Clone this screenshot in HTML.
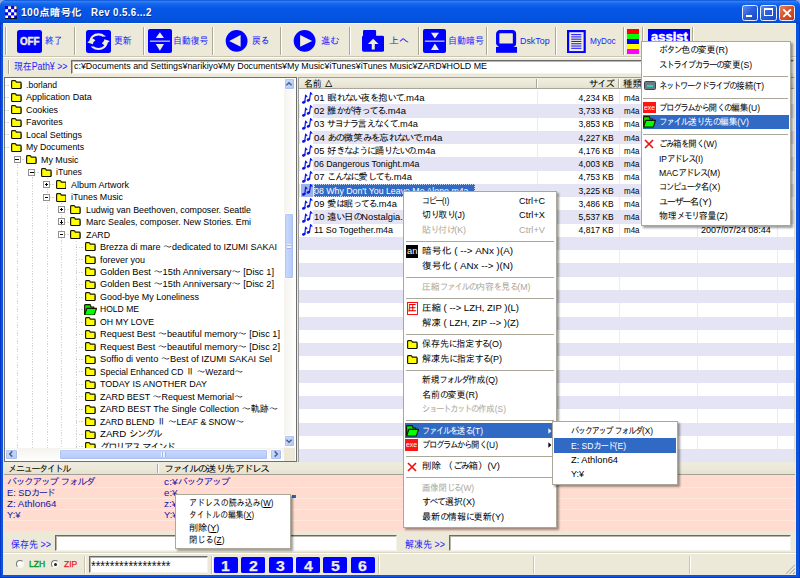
<!DOCTYPE html>
<html lang="ja"><head><meta charset="utf-8"><title>100点暗号化</title>
<style>
html,body{margin:0;padding:0;background:#8fa8e0;}
body{width:800px;height:578px;overflow:hidden;}
#win{position:relative;width:800px;height:578px;overflow:hidden;background:#0a54e0;border-radius:6px 6px 0 0;
 font-family:"Liberation Sans","IPAGothic",sans-serif;font-size:9.4px;color:#000;}
#win div,#win span.t,#win svg{position:absolute;}
.t{white-space:nowrap;line-height:12px;transform-origin:0 50%;}
.k{letter-spacing:-0.17em;}
.bl{color:#0000ff;}
.nv{color:#1414a8;}
.gr{color:#aca899;}
.wh{color:#fff;}
.menu{background:#fff;border:1px solid #aca899;box-shadow:2px 2px 2px rgba(0,0,0,.38);box-sizing:border-box;}
.sep{background:#aca899;height:1px;}
.hl{background:#316ac5;}
.inp{background:#fff;border:1px solid #6a6a6a;border-right-color:#f4f2ea;border-bottom-color:#f4f2ea;box-sizing:border-box;box-shadow:inset 1px 1px 0 #b8b6aa;}
.vsep{width:1px;background:#aca899;box-shadow:1px 0 0 #fff;}
.tb{background:#0000ff;border-radius:2px;}
.ttl{text-shadow:.8px .8px 0 #0a2c96;white-space:pre;letter-spacing:.4px}
.hv2{-webkit-text-stroke:.25px currentColor;}
.hv{-webkit-text-stroke:.45px currentColor;}
</style></head><body><div id="win">
<div class="" style="left:0.00px;top:0.00px;width:800.00px;height:23.50px;background:linear-gradient(#0a4fd0 0,#2f7ff5 6%,#1466ee 16%,#0657e6 35%,#0454e2 70%,#0650da 88%,#0445c4 100%);border-radius:6px 6px 0 0;"></div>
<div class="" style="left:3.30px;top:23.30px;width:792.80px;height:552.20px;background:#ece9d8;"></div>
<div class="" style="left:0.00px;top:23.00px;width:1.00px;height:555.00px;background:#0838c8;"></div>
<div class="" style="left:799.00px;top:23.00px;width:1.00px;height:555.00px;background:#0838c8;"></div>
<div class="" style="left:0.00px;top:577.00px;width:800.00px;height:1.00px;background:#0838c8;"></div>
<svg style="left:4.9px;top:6.1px" width="12.2" height="12.6" viewBox="0 0 4 4" preserveAspectRatio="none"><rect width="4" height="4" fill="#fff"/><rect x="0" y="0" width="1" height="1" fill="#0000ff"/><rect x="2" y="0" width="1" height="1" fill="#0000ff"/><rect x="1" y="1" width="1" height="1" fill="#0000ff"/><rect x="3" y="1" width="1" height="1" fill="#0000ff"/><rect x="0" y="2" width="1" height="1" fill="#0000ff"/><rect x="2" y="2" width="1" height="1" fill="#0000ff"/><rect x="1" y="3" width="1" height="1" fill="#0000ff"/><rect x="3" y="3" width="1" height="1" fill="#0000ff"/><path d="M0 0H4V4H0z" fill="none" stroke="#000" stroke-width=".16"/><path d="M4 0V4H0" fill="none" stroke="#000" stroke-width=".3"/></svg>
<span id="t1" class="t ttl" style="left:20.50px;top:6.70px;color:#fff;font-size:10.2px;font-weight:bold;transform:scaleX(1.0072)">100点暗号化</span>
<span id="t2" class="t ttl" style="left:91.30px;top:6.70px;color:#fff;font-size:10.2px;font-weight:bold;transform:scaleX(0.9552)">Rev 0.5.6...2</span>
<div class="" style="left:742.20px;top:4.60px;width:16.20px;height:16.20px;background:linear-gradient(135deg,#5f8df0 0,#2c5fdc 45%,#1c48c4 100%);border:1px solid #e8eefc;border-radius:2.5px;box-sizing:border-box;"></div>
<div class="" style="left:760.40px;top:4.60px;width:16.20px;height:16.20px;background:linear-gradient(135deg,#5f8df0 0,#2c5fdc 45%,#1c48c4 100%);border:1px solid #e8eefc;border-radius:2.5px;box-sizing:border-box;"></div>
<div class="" style="left:778.50px;top:4.60px;width:16.20px;height:16.20px;background:linear-gradient(135deg,#e8825c 0,#d9532c 45%,#c23a14 100%);border:1px solid #e8eefc;border-radius:2.5px;box-sizing:border-box;"></div>
<div class="" style="left:746.30px;top:15.00px;width:5.60px;height:2.20px;background:#fff;"></div>
<div class="" style="left:764.20px;top:8.30px;width:8.40px;height:8.20px;border:1px solid #fff;border-top-width:2.3px;box-sizing:border-box;"></div>
<svg style="left:778.5px;top:4.6px" width="16.2" height="16.2" viewBox="0 0 16.2 16.2"><path d="M4.3 4.3L11.9 11.9M11.9 4.3L4.3 11.9" stroke="#fff" stroke-width="1.9" stroke-linecap="butt"/></svg>
<div class="" style="left:3.30px;top:23.30px;width:792.80px;height:1.00px;background:#fff;opacity:.7"></div>
<div class="" style="left:3.30px;top:55.60px;width:792.80px;height:1.00px;background:#c9c5b2;"></div>
<div class="" style="left:3.30px;top:56.60px;width:792.80px;height:1.00px;background:#fff;"></div>
<div class="vsep" style="left:5.30px;top:27.00px;width:1.00px;height:27.50px;"></div>
<div class="vsep" style="left:74.30px;top:27.00px;width:1.00px;height:27.50px;"></div>
<div class="vsep" style="left:143.00px;top:27.00px;width:1.00px;height:27.50px;"></div>
<div class="vsep" style="left:211.70px;top:27.00px;width:1.00px;height:27.50px;"></div>
<div class="vsep" style="left:280.30px;top:27.00px;width:1.00px;height:27.50px;"></div>
<div class="vsep" style="left:349.00px;top:27.00px;width:1.00px;height:27.50px;"></div>
<div class="vsep" style="left:417.60px;top:27.00px;width:1.00px;height:27.50px;"></div>
<div class="vsep" style="left:486.20px;top:27.00px;width:1.00px;height:27.50px;"></div>
<div class="vsep" style="left:555.00px;top:27.00px;width:1.00px;height:27.50px;"></div>
<div class="vsep" style="left:623.40px;top:27.00px;width:1.00px;height:27.50px;"></div>
<div class="vsep" style="left:641.50px;top:27.00px;width:1.00px;height:27.50px;"></div>
<div class="vsep" style="left:692.40px;top:27.00px;width:1.00px;height:27.50px;"></div>
<div class="tb" style="left:16.90px;top:29.60px;width:25.20px;height:23.40px;border-radius:2.5px"></div>
<span id="t3" class="t hv" style="left:19.70px;top:35.60px;color:#efecdc;font-size:10px;font-weight:bold;transform:scaleX(0.9800)">OFF</span>
<span id="t4" class="t " style="left:45.20px;top:35.30px;color:#2222ff;font-size:9.6px;transform:scaleX(0.9068)">終了</span>
<div class="tb" style="left:85.85px;top:29.60px;width:25.10px;height:23.50px;border-radius:2.5px"></div>
<svg style="left:85.85px;top:29.60px" width="25.10" height="23.50" viewBox="0 0 25.10 23.50"><ellipse cx="12.5" cy="11.7" rx="8.3" ry="7.3" fill="none" stroke="#efecdc" stroke-width="2.1"/><rect x="2.6" y="12.2" width="5.5" height="4.2" fill="#00f"/><rect x="17" y="6.6" width="5.5" height="4.2" fill="#00f"/><path d="M1.3 12.4L6.6 8.2L9.4 10.2L7.2 12.4L7 14.2z" fill="#efecdc"/><path d="M23.8 10.9L18.6 15.4L15.8 13.2L18 11L18.3 9.3z" fill="#efecdc"/></svg>
<span id="t5" class="t " style="left:114.10px;top:35.30px;color:#2222ff;font-size:9.6px;transform:scaleX(0.9225)">更新</span>
<div class="tb" style="left:148.10px;top:29.40px;width:23.80px;height:23.50px;border-radius:2px"></div>
<svg style="left:148.10px;top:29.40px" width="23.80" height="23.50" viewBox="0 0 23.80 23.50"><path d="M11.9 3.2L16 9.1H7.8z" fill="#efecdc"/><rect x="1.9" y="11.6" width="20.1" height="1.1" fill="#efecdc"/><path d="M11.9 21.8L16 15H7.8z" fill="#efecdc"/></svg>
<span id="t6" class="t " style="left:173.20px;top:35.30px;color:#2222ff;font-size:9.6px;transform:scaleX(0.9225)">自動復号</span>
<svg style="left:224.50px;top:29.40px" width="24.00" height="24.00" viewBox="0 0 24.00 24.00"><circle cx="11.6" cy="11.9" r="10.9" fill="#00f"/><path d="M4.2 11.9L15.6 6.1V17.7z" fill="#efecdc"/></svg>
<span id="t7" class="t " style="left:252.00px;top:35.30px;color:#2222ff;font-size:9.6px;transform:scaleX(0.9110)">戻<span class="k">る</span></span>
<svg style="left:292.50px;top:29.40px" width="24.00" height="24.00" viewBox="0 0 24.00 24.00"><circle cx="11.6" cy="11.9" r="10.9" fill="#00f"/><path d="M19.2 11.9L7.1 6.1V17.7z" fill="#efecdc"/></svg>
<span id="t8" class="t " style="left:320.50px;top:35.30px;color:#2222ff;font-size:9.6px;transform:scaleX(0.9680)">進<span class="k">む</span></span>
<svg style="left:361.90px;top:30.30px" width="22.40" height="22.00" viewBox="0 0 22.40 22.00"><path d="M1 1.2Q1 .1 2.2 .1H13Q14.1 .1 14.1 1.2V5.7H20.4Q22.2 5.7 22.2 7.5V20Q22.2 21.8 20.4 21.8H1.8Q0 21.8 0 20V7.5Q0 6 1 5.8z" fill="#00f"/><path d="M11.1 8.7L16.5 14H12.75V19.6H9.75V14H5.85z" fill="#efecdc"/></svg>
<span id="t9" class="t " style="left:388.90px;top:35.30px;color:#2222ff;font-size:9.6px;transform:scaleX(1.0363)">上<span class="k">へ</span></span>
<div class="tb" style="left:422.95px;top:29.40px;width:23.40px;height:23.60px;border-radius:2px"></div>
<svg style="left:422.95px;top:29.40px" width="23.40" height="23.60" viewBox="0 0 23.40 23.60"><path d="M11.9 9.6L16 3.7H8z" fill="#efecdc"/><rect x="1.9" y="11.6" width="19.6" height="1.1" fill="#efecdc"/><path d="M11.9 14.6L16 20.9H8z" fill="#efecdc"/></svg>
<span id="t10" class="t " style="left:448.00px;top:35.30px;color:#2222ff;font-size:9.6px;transform:scaleX(0.9355)">自動暗号</span>
<svg style="left:496.20px;top:29.50px" width="21.20" height="23.00" viewBox="0 0 21.20 23.00"><rect x="1.7" y="1.7" width="16.8" height="13.4" rx="2.2" fill="none" stroke="#00f" stroke-width="3.3"/><rect x="2.6" y="15.5" width="15" height="2" fill="#00f"/><rect x="0" y="16.9" width="21" height="5.9" fill="#00f"/></svg>
<span id="t11" class="t " style="left:519.50px;top:35.30px;color:#2222ff;font-size:9.6px;transform:scaleX(0.9250)">DskTop</span>
<svg style="left:567.15px;top:29.60px" width="18.80" height="23.30" viewBox="0 0 18.80 23.30"><rect x="1.1" y="1.1" width="16.6" height="21.1" fill="#efecdc" stroke="#00f" stroke-width="2.2"/><rect x="4.2" y="4.10" width="10.2" height="1.05" fill="#1a1aff"/><rect x="4.2" y="6.38" width="10.2" height="1.05" fill="#1a1aff"/><rect x="4.2" y="8.66" width="10.2" height="1.05" fill="#1a1aff"/><rect x="4.2" y="10.94" width="10.2" height="1.05" fill="#1a1aff"/><rect x="4.2" y="13.22" width="10.2" height="1.05" fill="#1a1aff"/><rect x="4.2" y="15.50" width="10.2" height="1.05" fill="#1a1aff"/><rect x="4.2" y="17.78" width="10.2" height="1.05" fill="#1a1aff"/></svg>
<span id="t12" class="t " style="left:589.90px;top:35.30px;color:#2222ff;font-size:9.6px;transform:scaleX(0.8607)">MyDoc</span>
<div class="" style="left:627.35px;top:28.90px;width:11.55px;height:5.00px;background:#ff0000;"></div>
<div class="" style="left:627.35px;top:33.87px;width:11.55px;height:5.00px;background:#00ff00;"></div>
<div class="" style="left:627.35px;top:38.84px;width:11.55px;height:5.00px;background:#0000ff;"></div>
<div class="" style="left:627.35px;top:43.81px;width:11.55px;height:5.00px;background:#ffff00;"></div>
<div class="" style="left:627.35px;top:48.78px;width:11.55px;height:5.00px;background:#ff00ff;"></div>
<div class="" style="left:648.00px;top:28.90px;width:42.00px;height:14.00px;background:#0000ff;"></div>
<span id="t13" class="t hv" style="left:650.60px;top:31.10px;color:#fff;font-size:12px;font-weight:bold;transform:scaleX(1.0814)">assist</span>
<div class="vsep" style="left:7.50px;top:60.00px;width:1.00px;height:13.50px;"></div>
<span id="t14" class="t " style="left:13.80px;top:60.50px;color:#2222ff;font-size:10.3px;transform:scaleX(0.8575)">現在Path¥ &gt;&gt;</span>
<div class="inp" style="left:71.20px;top:59.60px;width:723.30px;height:14.50px;"></div>
<span id="t15" class="t " style="left:73.60px;top:60.10px;transform:scaleX(0.9463)">c:¥Documents and Settings¥narikiyo¥My Documents¥My Music¥iTunes¥iTunes Music¥ZARD¥HOLD ME</span>
<div class="" style="left:4.00px;top:76.50px;width:292.80px;height:385.00px;background:#fff;border:1px solid #6e6e6e;box-sizing:border-box;overflow:hidden;"></div>
<div class="" style="left:2.00px;top:78.00px;width:1.00px;height:468.93px;background:repeating-linear-gradient(180deg,#9a9a9a 0 .8px,transparent .8px 1.6px);opacity:.42"></div>
<div class="" style="left:17.00px;top:159.40px;width:1.00px;height:291.60px;background:repeating-linear-gradient(180deg,#9a9a9a 0 .8px,transparent .8px 1.6px);opacity:.42"></div>
<div class="" style="left:31.70px;top:171.88px;width:1.00px;height:276.12px;background:repeating-linear-gradient(180deg,#9a9a9a 0 .8px,transparent .8px 1.6px);opacity:.42"></div>
<div class="" style="left:46.50px;top:178.35px;width:1.00px;height:269.65px;background:repeating-linear-gradient(180deg,#9a9a9a 0 .8px,transparent .8px 1.6px);opacity:.42"></div>
<div class="" style="left:61.30px;top:203.30px;width:1.00px;height:244.70px;background:repeating-linear-gradient(180deg,#9a9a9a 0 .8px,transparent .8px 1.6px);opacity:.42"></div>
<div class="" style="left:76.10px;top:240.72px;width:1.00px;height:207.28px;background:repeating-linear-gradient(180deg,#9a9a9a 0 .8px,transparent .8px 1.6px);opacity:.42"></div>
<div class="" style="left:2.40px;top:84.55px;width:8.00px;height:1.00px;background:repeating-linear-gradient(90deg,#9a9a9a 0 .8px,transparent .8px 1.6px);opacity:.42"></div>
<svg style="left:11.20px;top:80.25px" width="10.8" height="9.2" viewBox="0 0 10.8 9.2"><path d="M.6 7.8V1.5Q.6 .6 1.5 .6H3.8Q4.6 .6 4.9 1.2L5.3 2.1H9.2Q10.1 2.1 10.1 3V7.8Q10.1 8.5 9.2 8.5H1.5Q.6 8.5 .6 7.8z" fill="#ffff00" stroke="#1c1a00" stroke-width="1.15"/><path d="M1.2 8.5H9.3Q10.1 8.5 10.1 7.6V3.4" fill="none" stroke="#000" stroke-width=".5"/></svg>
<span id="t16" class="t " style="left:26.30px;top:78.85px;transform:scaleX(0.9147)">.borland</span>
<div class="" style="left:2.40px;top:97.02px;width:8.00px;height:1.00px;background:repeating-linear-gradient(90deg,#9a9a9a 0 .8px,transparent .8px 1.6px);opacity:.42"></div>
<div class="" style="left:-1.50px;top:93.72px;width:6.90px;height:7.00px;background:#fff;border:1px solid #919191;box-sizing:border-box;"></div>
<svg style="left:11.20px;top:92.72px" width="10.8" height="9.2" viewBox="0 0 10.8 9.2"><path d="M.6 7.8V1.5Q.6 .6 1.5 .6H3.8Q4.6 .6 4.9 1.2L5.3 2.1H9.2Q10.1 2.1 10.1 3V7.8Q10.1 8.5 9.2 8.5H1.5Q.6 8.5 .6 7.8z" fill="#ffff00" stroke="#1c1a00" stroke-width="1.15"/><path d="M1.2 8.5H9.3Q10.1 8.5 10.1 7.6V3.4" fill="none" stroke="#000" stroke-width=".5"/></svg>
<span id="t17" class="t " style="left:26.30px;top:91.32px;transform:scaleX(0.9622)">Application Data</span>
<div class="" style="left:2.40px;top:109.50px;width:8.00px;height:1.00px;background:repeating-linear-gradient(90deg,#9a9a9a 0 .8px,transparent .8px 1.6px);opacity:.42"></div>
<svg style="left:11.20px;top:105.20px" width="10.8" height="9.2" viewBox="0 0 10.8 9.2"><path d="M.6 7.8V1.5Q.6 .6 1.5 .6H3.8Q4.6 .6 4.9 1.2L5.3 2.1H9.2Q10.1 2.1 10.1 3V7.8Q10.1 8.5 9.2 8.5H1.5Q.6 8.5 .6 7.8z" fill="#ffff00" stroke="#1c1a00" stroke-width="1.15"/><path d="M1.2 8.5H9.3Q10.1 8.5 10.1 7.6V3.4" fill="none" stroke="#000" stroke-width=".5"/></svg>
<span id="t18" class="t " style="left:26.30px;top:103.80px;transform:scaleX(0.9446)">Cookies</span>
<div class="" style="left:2.40px;top:121.97px;width:8.00px;height:1.00px;background:repeating-linear-gradient(90deg,#9a9a9a 0 .8px,transparent .8px 1.6px);opacity:.42"></div>
<div class="" style="left:-1.50px;top:118.67px;width:6.90px;height:7.00px;background:#fff;border:1px solid #919191;box-sizing:border-box;"></div>
<svg style="left:11.20px;top:117.67px" width="10.8" height="9.2" viewBox="0 0 10.8 9.2"><path d="M.6 7.8V1.5Q.6 .6 1.5 .6H3.8Q4.6 .6 4.9 1.2L5.3 2.1H9.2Q10.1 2.1 10.1 3V7.8Q10.1 8.5 9.2 8.5H1.5Q.6 8.5 .6 7.8z" fill="#ffff00" stroke="#1c1a00" stroke-width="1.15"/><path d="M1.2 8.5H9.3Q10.1 8.5 10.1 7.6V3.4" fill="none" stroke="#000" stroke-width=".5"/></svg>
<span id="t19" class="t " style="left:26.30px;top:116.27px;transform:scaleX(0.9517)">Favorites</span>
<div class="" style="left:2.40px;top:134.45px;width:8.00px;height:1.00px;background:repeating-linear-gradient(90deg,#9a9a9a 0 .8px,transparent .8px 1.6px);opacity:.42"></div>
<div class="" style="left:-1.50px;top:131.15px;width:6.90px;height:7.00px;background:#fff;border:1px solid #919191;box-sizing:border-box;"></div>
<svg style="left:11.20px;top:130.15px" width="10.8" height="9.2" viewBox="0 0 10.8 9.2"><path d="M.6 7.8V1.5Q.6 .6 1.5 .6H3.8Q4.6 .6 4.9 1.2L5.3 2.1H9.2Q10.1 2.1 10.1 3V7.8Q10.1 8.5 9.2 8.5H1.5Q.6 8.5 .6 7.8z" fill="#ffff00" stroke="#1c1a00" stroke-width="1.15"/><path d="M1.2 8.5H9.3Q10.1 8.5 10.1 7.6V3.4" fill="none" stroke="#000" stroke-width=".5"/></svg>
<span id="t20" class="t " style="left:26.30px;top:128.75px;transform:scaleX(0.9507)">Local Settings</span>
<div class="" style="left:2.40px;top:146.93px;width:8.00px;height:1.00px;background:repeating-linear-gradient(90deg,#9a9a9a 0 .8px,transparent .8px 1.6px);opacity:.42"></div>
<div class="" style="left:-1.50px;top:143.62px;width:6.90px;height:7.00px;background:#fff;border:1px solid #919191;box-sizing:border-box;"></div>
<svg style="left:11.20px;top:142.62px" width="10.8" height="9.2" viewBox="0 0 10.8 9.2"><path d="M.6 7.8V1.5Q.6 .6 1.5 .6H3.8Q4.6 .6 4.9 1.2L5.3 2.1H9.2Q10.1 2.1 10.1 3V7.8Q10.1 8.5 9.2 8.5H1.5Q.6 8.5 .6 7.8z" fill="#ffff00" stroke="#1c1a00" stroke-width="1.15"/><path d="M1.2 8.5H9.3Q10.1 8.5 10.1 7.6V3.4" fill="none" stroke="#000" stroke-width=".5"/></svg>
<span id="t21" class="t " style="left:26.30px;top:141.23px;transform:scaleX(0.9275)">My Documents</span>
<div class="" style="left:17.20px;top:159.40px;width:8.00px;height:1.00px;background:repeating-linear-gradient(90deg,#9a9a9a 0 .8px,transparent .8px 1.6px);opacity:.42"></div>
<div class="" style="left:13.50px;top:156.10px;width:7.00px;height:7.00px;background:#fff;border:1px solid #919191;box-sizing:border-box;"></div>
<div class="" style="left:15.30px;top:159.20px;width:3.60px;height:0.90px;background:#000;"></div>
<svg style="left:26.00px;top:155.10px" width="10.8" height="9.2" viewBox="0 0 10.8 9.2"><path d="M.6 7.8V1.5Q.6 .6 1.5 .6H3.8Q4.6 .6 4.9 1.2L5.3 2.1H9.2Q10.1 2.1 10.1 3V7.8Q10.1 8.5 9.2 8.5H1.5Q.6 8.5 .6 7.8z" fill="#ffff00" stroke="#1c1a00" stroke-width="1.15"/><path d="M1.2 8.5H9.3Q10.1 8.5 10.1 7.6V3.4" fill="none" stroke="#000" stroke-width=".5"/></svg>
<span id="t22" class="t " style="left:41.10px;top:153.70px;transform:scaleX(0.9471)">My Music</span>
<div class="" style="left:32.00px;top:171.88px;width:8.00px;height:1.00px;background:repeating-linear-gradient(90deg,#9a9a9a 0 .8px,transparent .8px 1.6px);opacity:.42"></div>
<div class="" style="left:28.30px;top:168.57px;width:7.00px;height:7.00px;background:#fff;border:1px solid #919191;box-sizing:border-box;"></div>
<div class="" style="left:30.10px;top:171.68px;width:3.60px;height:0.90px;background:#000;"></div>
<svg style="left:40.80px;top:167.57px" width="10.8" height="9.2" viewBox="0 0 10.8 9.2"><path d="M.6 7.8V1.5Q.6 .6 1.5 .6H3.8Q4.6 .6 4.9 1.2L5.3 2.1H9.2Q10.1 2.1 10.1 3V7.8Q10.1 8.5 9.2 8.5H1.5Q.6 8.5 .6 7.8z" fill="#ffff00" stroke="#1c1a00" stroke-width="1.15"/><path d="M1.2 8.5H9.3Q10.1 8.5 10.1 7.6V3.4" fill="none" stroke="#000" stroke-width=".5"/></svg>
<span id="t23" class="t " style="left:55.90px;top:166.18px;transform:scaleX(0.9354)">iTunes</span>
<div class="" style="left:46.80px;top:184.35px;width:8.00px;height:1.00px;background:repeating-linear-gradient(90deg,#9a9a9a 0 .8px,transparent .8px 1.6px);opacity:.42"></div>
<div class="" style="left:43.10px;top:181.05px;width:7.00px;height:7.00px;background:#fff;border:1px solid #919191;box-sizing:border-box;"></div>
<div class="" style="left:44.90px;top:184.15px;width:3.60px;height:0.90px;background:#000;"></div>
<div class="" style="left:46.25px;top:182.75px;width:0.90px;height:3.60px;background:#000;"></div>
<svg style="left:55.60px;top:180.05px" width="10.8" height="9.2" viewBox="0 0 10.8 9.2"><path d="M.6 7.8V1.5Q.6 .6 1.5 .6H3.8Q4.6 .6 4.9 1.2L5.3 2.1H9.2Q10.1 2.1 10.1 3V7.8Q10.1 8.5 9.2 8.5H1.5Q.6 8.5 .6 7.8z" fill="#ffff00" stroke="#1c1a00" stroke-width="1.15"/><path d="M1.2 8.5H9.3Q10.1 8.5 10.1 7.6V3.4" fill="none" stroke="#000" stroke-width=".5"/></svg>
<span id="t24" class="t " style="left:70.70px;top:178.65px;transform:scaleX(0.9597)">Album Artwork</span>
<div class="" style="left:46.80px;top:196.82px;width:8.00px;height:1.00px;background:repeating-linear-gradient(90deg,#9a9a9a 0 .8px,transparent .8px 1.6px);opacity:.42"></div>
<div class="" style="left:43.10px;top:193.52px;width:7.00px;height:7.00px;background:#fff;border:1px solid #919191;box-sizing:border-box;"></div>
<div class="" style="left:44.90px;top:196.62px;width:3.60px;height:0.90px;background:#000;"></div>
<svg style="left:55.60px;top:192.52px" width="10.8" height="9.2" viewBox="0 0 10.8 9.2"><path d="M.6 7.8V1.5Q.6 .6 1.5 .6H3.8Q4.6 .6 4.9 1.2L5.3 2.1H9.2Q10.1 2.1 10.1 3V7.8Q10.1 8.5 9.2 8.5H1.5Q.6 8.5 .6 7.8z" fill="#ffff00" stroke="#1c1a00" stroke-width="1.15"/><path d="M1.2 8.5H9.3Q10.1 8.5 10.1 7.6V3.4" fill="none" stroke="#000" stroke-width=".5"/></svg>
<span id="t25" class="t " style="left:70.70px;top:191.12px;transform:scaleX(0.9473)">iTunes Music</span>
<div class="" style="left:61.60px;top:209.30px;width:8.00px;height:1.00px;background:repeating-linear-gradient(90deg,#9a9a9a 0 .8px,transparent .8px 1.6px);opacity:.42"></div>
<div class="" style="left:57.90px;top:206.00px;width:7.00px;height:7.00px;background:#fff;border:1px solid #919191;box-sizing:border-box;"></div>
<div class="" style="left:59.70px;top:209.10px;width:3.60px;height:0.90px;background:#000;"></div>
<div class="" style="left:61.05px;top:207.70px;width:0.90px;height:3.60px;background:#000;"></div>
<svg style="left:70.40px;top:205.00px" width="10.8" height="9.2" viewBox="0 0 10.8 9.2"><path d="M.6 7.8V1.5Q.6 .6 1.5 .6H3.8Q4.6 .6 4.9 1.2L5.3 2.1H9.2Q10.1 2.1 10.1 3V7.8Q10.1 8.5 9.2 8.5H1.5Q.6 8.5 .6 7.8z" fill="#ffff00" stroke="#1c1a00" stroke-width="1.15"/><path d="M1.2 8.5H9.3Q10.1 8.5 10.1 7.6V3.4" fill="none" stroke="#000" stroke-width=".5"/></svg>
<span id="t26" class="t " style="left:85.50px;top:203.60px;transform:scaleX(0.9422)">Ludwig van Beethoven, composer. Seattle</span>
<div class="" style="left:61.60px;top:221.77px;width:8.00px;height:1.00px;background:repeating-linear-gradient(90deg,#9a9a9a 0 .8px,transparent .8px 1.6px);opacity:.42"></div>
<div class="" style="left:57.90px;top:218.47px;width:7.00px;height:7.00px;background:#fff;border:1px solid #919191;box-sizing:border-box;"></div>
<div class="" style="left:59.70px;top:221.57px;width:3.60px;height:0.90px;background:#000;"></div>
<div class="" style="left:61.05px;top:220.17px;width:0.90px;height:3.60px;background:#000;"></div>
<svg style="left:70.40px;top:217.47px" width="10.8" height="9.2" viewBox="0 0 10.8 9.2"><path d="M.6 7.8V1.5Q.6 .6 1.5 .6H3.8Q4.6 .6 4.9 1.2L5.3 2.1H9.2Q10.1 2.1 10.1 3V7.8Q10.1 8.5 9.2 8.5H1.5Q.6 8.5 .6 7.8z" fill="#ffff00" stroke="#1c1a00" stroke-width="1.15"/><path d="M1.2 8.5H9.3Q10.1 8.5 10.1 7.6V3.4" fill="none" stroke="#000" stroke-width=".5"/></svg>
<span id="t27" class="t " style="left:85.50px;top:216.07px;transform:scaleX(0.9425)">Marc Seales, composer. New Stories. Emi</span>
<div class="" style="left:61.60px;top:234.25px;width:8.00px;height:1.00px;background:repeating-linear-gradient(90deg,#9a9a9a 0 .8px,transparent .8px 1.6px);opacity:.42"></div>
<div class="" style="left:57.90px;top:230.95px;width:7.00px;height:7.00px;background:#fff;border:1px solid #919191;box-sizing:border-box;"></div>
<div class="" style="left:59.70px;top:234.05px;width:3.60px;height:0.90px;background:#000;"></div>
<svg style="left:70.40px;top:229.95px" width="10.8" height="9.2" viewBox="0 0 10.8 9.2"><path d="M.6 7.8V1.5Q.6 .6 1.5 .6H3.8Q4.6 .6 4.9 1.2L5.3 2.1H9.2Q10.1 2.1 10.1 3V7.8Q10.1 8.5 9.2 8.5H1.5Q.6 8.5 .6 7.8z" fill="#ffff00" stroke="#1c1a00" stroke-width="1.15"/><path d="M1.2 8.5H9.3Q10.1 8.5 10.1 7.6V3.4" fill="none" stroke="#000" stroke-width=".5"/></svg>
<span id="t28" class="t " style="left:85.50px;top:228.55px;transform:scaleX(0.9400)">ZARD</span>
<div class="" style="left:76.40px;top:246.72px;width:8.00px;height:1.00px;background:repeating-linear-gradient(90deg,#9a9a9a 0 .8px,transparent .8px 1.6px);opacity:.42"></div>
<svg style="left:85.20px;top:242.42px" width="10.8" height="9.2" viewBox="0 0 10.8 9.2"><path d="M.6 7.8V1.5Q.6 .6 1.5 .6H3.8Q4.6 .6 4.9 1.2L5.3 2.1H9.2Q10.1 2.1 10.1 3V7.8Q10.1 8.5 9.2 8.5H1.5Q.6 8.5 .6 7.8z" fill="#ffff00" stroke="#1c1a00" stroke-width="1.15"/><path d="M1.2 8.5H9.3Q10.1 8.5 10.1 7.6V3.4" fill="none" stroke="#000" stroke-width=".5"/></svg>
<span id="t29" class="t " style="left:100.30px;top:241.02px;transform:scaleX(0.9596)">Brezza di mare ～dedicated to IZUMI SAKAI</span>
<div class="" style="left:76.40px;top:259.20px;width:8.00px;height:1.00px;background:repeating-linear-gradient(90deg,#9a9a9a 0 .8px,transparent .8px 1.6px);opacity:.42"></div>
<svg style="left:85.20px;top:254.90px" width="10.8" height="9.2" viewBox="0 0 10.8 9.2"><path d="M.6 7.8V1.5Q.6 .6 1.5 .6H3.8Q4.6 .6 4.9 1.2L5.3 2.1H9.2Q10.1 2.1 10.1 3V7.8Q10.1 8.5 9.2 8.5H1.5Q.6 8.5 .6 7.8z" fill="#ffff00" stroke="#1c1a00" stroke-width="1.15"/><path d="M1.2 8.5H9.3Q10.1 8.5 10.1 7.6V3.4" fill="none" stroke="#000" stroke-width=".5"/></svg>
<span id="t30" class="t " style="left:100.30px;top:253.50px;transform:scaleX(0.9594)">forever you</span>
<div class="" style="left:76.40px;top:271.68px;width:8.00px;height:1.00px;background:repeating-linear-gradient(90deg,#9a9a9a 0 .8px,transparent .8px 1.6px);opacity:.42"></div>
<svg style="left:85.20px;top:267.38px" width="10.8" height="9.2" viewBox="0 0 10.8 9.2"><path d="M.6 7.8V1.5Q.6 .6 1.5 .6H3.8Q4.6 .6 4.9 1.2L5.3 2.1H9.2Q10.1 2.1 10.1 3V7.8Q10.1 8.5 9.2 8.5H1.5Q.6 8.5 .6 7.8z" fill="#ffff00" stroke="#1c1a00" stroke-width="1.15"/><path d="M1.2 8.5H9.3Q10.1 8.5 10.1 7.6V3.4" fill="none" stroke="#000" stroke-width=".5"/></svg>
<span id="t31" class="t " style="left:100.30px;top:265.98px;transform:scaleX(0.9850)">Golden Best ～15th Anniversary～ [Disc 1]</span>
<div class="" style="left:76.40px;top:284.15px;width:8.00px;height:1.00px;background:repeating-linear-gradient(90deg,#9a9a9a 0 .8px,transparent .8px 1.6px);opacity:.42"></div>
<svg style="left:85.20px;top:279.85px" width="10.8" height="9.2" viewBox="0 0 10.8 9.2"><path d="M.6 7.8V1.5Q.6 .6 1.5 .6H3.8Q4.6 .6 4.9 1.2L5.3 2.1H9.2Q10.1 2.1 10.1 3V7.8Q10.1 8.5 9.2 8.5H1.5Q.6 8.5 .6 7.8z" fill="#ffff00" stroke="#1c1a00" stroke-width="1.15"/><path d="M1.2 8.5H9.3Q10.1 8.5 10.1 7.6V3.4" fill="none" stroke="#000" stroke-width=".5"/></svg>
<span id="t32" class="t " style="left:100.30px;top:278.45px;transform:scaleX(0.9850)">Golden Best ～15th Anniversary～ [Disc 2]</span>
<div class="" style="left:76.40px;top:296.62px;width:8.00px;height:1.00px;background:repeating-linear-gradient(90deg,#9a9a9a 0 .8px,transparent .8px 1.6px);opacity:.42"></div>
<svg style="left:85.20px;top:292.33px" width="10.8" height="9.2" viewBox="0 0 10.8 9.2"><path d="M.6 7.8V1.5Q.6 .6 1.5 .6H3.8Q4.6 .6 4.9 1.2L5.3 2.1H9.2Q10.1 2.1 10.1 3V7.8Q10.1 8.5 9.2 8.5H1.5Q.6 8.5 .6 7.8z" fill="#ffff00" stroke="#1c1a00" stroke-width="1.15"/><path d="M1.2 8.5H9.3Q10.1 8.5 10.1 7.6V3.4" fill="none" stroke="#000" stroke-width=".5"/></svg>
<span id="t33" class="t " style="left:100.30px;top:290.93px;transform:scaleX(0.9546)">Good-bye My Loneliness</span>
<div class="" style="left:76.40px;top:309.10px;width:8.00px;height:1.00px;background:repeating-linear-gradient(90deg,#9a9a9a 0 .8px,transparent .8px 1.6px);opacity:.42"></div>
<svg style="left:84.20px;top:303.60px" width="13" height="11.6" viewBox="0 0 13 11.6"><path d="M.6 10.8V1.3Q.6 .6 1.3 .6H5.7Q6.4 .6 6.6 1.3L7 3H9.7V4.4" fill="#00e400" stroke="#161600" stroke-width="1.1"/><path d="M1 4.6H3.2L1 10z" fill="#6b5800"/><path d="M.6 11L2.9 4.4H12.5L10.3 11z" fill="#00ff00" stroke="#161600" stroke-width="1.1" stroke-linejoin="round"/></svg>
<span id="t34" class="t " style="left:100.30px;top:303.40px;transform:scaleX(0.9129)">HOLD ME</span>
<div class="" style="left:76.40px;top:321.57px;width:8.00px;height:1.00px;background:repeating-linear-gradient(90deg,#9a9a9a 0 .8px,transparent .8px 1.6px);opacity:.42"></div>
<svg style="left:85.20px;top:317.28px" width="10.8" height="9.2" viewBox="0 0 10.8 9.2"><path d="M.6 7.8V1.5Q.6 .6 1.5 .6H3.8Q4.6 .6 4.9 1.2L5.3 2.1H9.2Q10.1 2.1 10.1 3V7.8Q10.1 8.5 9.2 8.5H1.5Q.6 8.5 .6 7.8z" fill="#ffff00" stroke="#1c1a00" stroke-width="1.15"/><path d="M1.2 8.5H9.3Q10.1 8.5 10.1 7.6V3.4" fill="none" stroke="#000" stroke-width=".5"/></svg>
<span id="t35" class="t " style="left:100.30px;top:315.88px;transform:scaleX(0.9280)">OH MY LOVE</span>
<div class="" style="left:76.40px;top:334.05px;width:8.00px;height:1.00px;background:repeating-linear-gradient(90deg,#9a9a9a 0 .8px,transparent .8px 1.6px);opacity:.42"></div>
<svg style="left:85.20px;top:329.75px" width="10.8" height="9.2" viewBox="0 0 10.8 9.2"><path d="M.6 7.8V1.5Q.6 .6 1.5 .6H3.8Q4.6 .6 4.9 1.2L5.3 2.1H9.2Q10.1 2.1 10.1 3V7.8Q10.1 8.5 9.2 8.5H1.5Q.6 8.5 .6 7.8z" fill="#ffff00" stroke="#1c1a00" stroke-width="1.15"/><path d="M1.2 8.5H9.3Q10.1 8.5 10.1 7.6V3.4" fill="none" stroke="#000" stroke-width=".5"/></svg>
<span id="t36" class="t " style="left:100.30px;top:328.35px;transform:scaleX(0.9814)">Request Best ～beautiful memory～ [Disc 1]</span>
<div class="" style="left:76.40px;top:346.52px;width:8.00px;height:1.00px;background:repeating-linear-gradient(90deg,#9a9a9a 0 .8px,transparent .8px 1.6px);opacity:.42"></div>
<svg style="left:85.20px;top:342.23px" width="10.8" height="9.2" viewBox="0 0 10.8 9.2"><path d="M.6 7.8V1.5Q.6 .6 1.5 .6H3.8Q4.6 .6 4.9 1.2L5.3 2.1H9.2Q10.1 2.1 10.1 3V7.8Q10.1 8.5 9.2 8.5H1.5Q.6 8.5 .6 7.8z" fill="#ffff00" stroke="#1c1a00" stroke-width="1.15"/><path d="M1.2 8.5H9.3Q10.1 8.5 10.1 7.6V3.4" fill="none" stroke="#000" stroke-width=".5"/></svg>
<span id="t37" class="t " style="left:100.30px;top:340.82px;transform:scaleX(0.9814)">Request Best ～beautiful memory～ [Disc 2]</span>
<div class="" style="left:76.40px;top:359.00px;width:8.00px;height:1.00px;background:repeating-linear-gradient(90deg,#9a9a9a 0 .8px,transparent .8px 1.6px);opacity:.42"></div>
<svg style="left:85.20px;top:354.70px" width="10.8" height="9.2" viewBox="0 0 10.8 9.2"><path d="M.6 7.8V1.5Q.6 .6 1.5 .6H3.8Q4.6 .6 4.9 1.2L5.3 2.1H9.2Q10.1 2.1 10.1 3V7.8Q10.1 8.5 9.2 8.5H1.5Q.6 8.5 .6 7.8z" fill="#ffff00" stroke="#1c1a00" stroke-width="1.15"/><path d="M1.2 8.5H9.3Q10.1 8.5 10.1 7.6V3.4" fill="none" stroke="#000" stroke-width=".5"/></svg>
<span id="t38" class="t " style="left:100.30px;top:353.30px;transform:scaleX(0.9834)">Soffio di vento ～Best of IZUMI SAKAI Sel</span>
<div class="" style="left:76.40px;top:371.48px;width:8.00px;height:1.00px;background:repeating-linear-gradient(90deg,#9a9a9a 0 .8px,transparent .8px 1.6px);opacity:.42"></div>
<svg style="left:85.20px;top:367.18px" width="10.8" height="9.2" viewBox="0 0 10.8 9.2"><path d="M.6 7.8V1.5Q.6 .6 1.5 .6H3.8Q4.6 .6 4.9 1.2L5.3 2.1H9.2Q10.1 2.1 10.1 3V7.8Q10.1 8.5 9.2 8.5H1.5Q.6 8.5 .6 7.8z" fill="#ffff00" stroke="#1c1a00" stroke-width="1.15"/><path d="M1.2 8.5H9.3Q10.1 8.5 10.1 7.6V3.4" fill="none" stroke="#000" stroke-width=".5"/></svg>
<span id="t39" class="t " style="left:100.30px;top:365.78px;transform:scaleX(0.9097)">Special Enhanced CD Ⅱ ～Wezard～</span>
<div class="" style="left:76.40px;top:383.95px;width:8.00px;height:1.00px;background:repeating-linear-gradient(90deg,#9a9a9a 0 .8px,transparent .8px 1.6px);opacity:.42"></div>
<svg style="left:85.20px;top:379.65px" width="10.8" height="9.2" viewBox="0 0 10.8 9.2"><path d="M.6 7.8V1.5Q.6 .6 1.5 .6H3.8Q4.6 .6 4.9 1.2L5.3 2.1H9.2Q10.1 2.1 10.1 3V7.8Q10.1 8.5 9.2 8.5H1.5Q.6 8.5 .6 7.8z" fill="#ffff00" stroke="#1c1a00" stroke-width="1.15"/><path d="M1.2 8.5H9.3Q10.1 8.5 10.1 7.6V3.4" fill="none" stroke="#000" stroke-width=".5"/></svg>
<span id="t40" class="t " style="left:100.30px;top:378.25px;transform:scaleX(0.9568)">TODAY IS ANOTHER DAY</span>
<div class="" style="left:76.40px;top:396.43px;width:8.00px;height:1.00px;background:repeating-linear-gradient(90deg,#9a9a9a 0 .8px,transparent .8px 1.6px);opacity:.42"></div>
<svg style="left:85.20px;top:392.13px" width="10.8" height="9.2" viewBox="0 0 10.8 9.2"><path d="M.6 7.8V1.5Q.6 .6 1.5 .6H3.8Q4.6 .6 4.9 1.2L5.3 2.1H9.2Q10.1 2.1 10.1 3V7.8Q10.1 8.5 9.2 8.5H1.5Q.6 8.5 .6 7.8z" fill="#ffff00" stroke="#1c1a00" stroke-width="1.15"/><path d="M1.2 8.5H9.3Q10.1 8.5 10.1 7.6V3.4" fill="none" stroke="#000" stroke-width=".5"/></svg>
<span id="t41" class="t " style="left:100.30px;top:390.73px;transform:scaleX(0.9541)">ZARD BEST ～Request Memorial～</span>
<div class="" style="left:76.40px;top:408.90px;width:8.00px;height:1.00px;background:repeating-linear-gradient(90deg,#9a9a9a 0 .8px,transparent .8px 1.6px);opacity:.42"></div>
<svg style="left:85.20px;top:404.60px" width="10.8" height="9.2" viewBox="0 0 10.8 9.2"><path d="M.6 7.8V1.5Q.6 .6 1.5 .6H3.8Q4.6 .6 4.9 1.2L5.3 2.1H9.2Q10.1 2.1 10.1 3V7.8Q10.1 8.5 9.2 8.5H1.5Q.6 8.5 .6 7.8z" fill="#ffff00" stroke="#1c1a00" stroke-width="1.15"/><path d="M1.2 8.5H9.3Q10.1 8.5 10.1 7.6V3.4" fill="none" stroke="#000" stroke-width=".5"/></svg>
<span id="t42" class="t " style="left:100.30px;top:403.20px;transform:scaleX(0.9696)">ZARD BEST The Single Collection ～軌跡～</span>
<div class="" style="left:76.40px;top:421.38px;width:8.00px;height:1.00px;background:repeating-linear-gradient(90deg,#9a9a9a 0 .8px,transparent .8px 1.6px);opacity:.42"></div>
<svg style="left:85.20px;top:417.08px" width="10.8" height="9.2" viewBox="0 0 10.8 9.2"><path d="M.6 7.8V1.5Q.6 .6 1.5 .6H3.8Q4.6 .6 4.9 1.2L5.3 2.1H9.2Q10.1 2.1 10.1 3V7.8Q10.1 8.5 9.2 8.5H1.5Q.6 8.5 .6 7.8z" fill="#ffff00" stroke="#1c1a00" stroke-width="1.15"/><path d="M1.2 8.5H9.3Q10.1 8.5 10.1 7.6V3.4" fill="none" stroke="#000" stroke-width=".5"/></svg>
<span id="t43" class="t " style="left:100.30px;top:415.68px;transform:scaleX(0.9184)">ZARD BLEND Ⅱ ～LEAF &amp; SNOW～</span>
<div class="" style="left:76.40px;top:433.85px;width:8.00px;height:1.00px;background:repeating-linear-gradient(90deg,#9a9a9a 0 .8px,transparent .8px 1.6px);opacity:.42"></div>
<svg style="left:85.20px;top:429.55px" width="10.8" height="9.2" viewBox="0 0 10.8 9.2"><path d="M.6 7.8V1.5Q.6 .6 1.5 .6H3.8Q4.6 .6 4.9 1.2L5.3 2.1H9.2Q10.1 2.1 10.1 3V7.8Q10.1 8.5 9.2 8.5H1.5Q.6 8.5 .6 7.8z" fill="#ffff00" stroke="#1c1a00" stroke-width="1.15"/><path d="M1.2 8.5H9.3Q10.1 8.5 10.1 7.6V3.4" fill="none" stroke="#000" stroke-width=".5"/></svg>
<span id="t44" class="t " style="left:100.30px;top:428.15px;transform:scaleX(1.0298)">ZARD <span class="k">シングル</span></span>
<div class="" style="left:76.40px;top:446.32px;width:8.00px;height:1.00px;background:repeating-linear-gradient(90deg,#9a9a9a 0 .8px,transparent .8px 1.6px);opacity:.42"></div>
<svg style="left:85.20px;top:442.03px" width="10.8" height="9.2" viewBox="0 0 10.8 9.2"><path d="M.6 7.8V1.5Q.6 .6 1.5 .6H3.8Q4.6 .6 4.9 1.2L5.3 2.1H9.2Q10.1 2.1 10.1 3V7.8Q10.1 8.5 9.2 8.5H1.5Q.6 8.5 .6 7.8z" fill="#ffff00" stroke="#1c1a00" stroke-width="1.15"/><path d="M1.2 8.5H9.3Q10.1 8.5 10.1 7.6V3.4" fill="none" stroke="#000" stroke-width=".5"/></svg>
<span id="t45" class="t " style="left:100.30px;top:440.62px;transform:scaleX(1.0192)"><span class="k">グロリアス</span> <span class="k">マインド</span></span>
<div class="" style="left:283.80px;top:77.50px;width:11.20px;height:370.50px;background:linear-gradient(90deg,#f4f3ee,#fefefd);"></div>
<div class="" style="left:283.80px;top:78.30px;width:11.20px;height:11.60px;background:linear-gradient(135deg,#cbdcfd,#b4c9f8);border:1px solid #fff;border-radius:2px;box-sizing:border-box;box-shadow:inset 0 0 0 .6px #9fb5ea;"></div>
<svg style="left:289.40px;top:84.10px;overflow:visible" width="1" height="1"><path d="M-2.6 1.3L0 -1.3L2.6 1.3" fill="none" stroke="#4d6185" stroke-width="1.5"/></svg>
<div class="" style="left:283.80px;top:434.80px;width:11.20px;height:12.40px;background:linear-gradient(135deg,#cbdcfd,#b4c9f8);border:1px solid #fff;border-radius:2px;box-sizing:border-box;box-shadow:inset 0 0 0 .6px #9fb5ea;"></div>
<svg style="left:289.40px;top:441.00px;overflow:visible" width="1" height="1"><path d="M-2.6 -1.3L0 1.3L2.6 -1.3" fill="none" stroke="#4d6185" stroke-width="1.5"/></svg>
<div class="" style="left:283.90px;top:212.50px;width:10.60px;height:66.50px;background:linear-gradient(90deg,#c9d9fd,#bdd0fc 60%,#b3c8f7);border:1px solid #fff;border-radius:2px;box-sizing:border-box;box-shadow:inset 0 0 0 .6px #a6bbee;"></div>
<div class="" style="left:286.90px;top:244.20px;width:4.60px;height:0.80px;background:#eef3ff;box-shadow:0 .7px 0 #8fa6dc;"></div>
<div class="" style="left:286.90px;top:245.80px;width:4.60px;height:0.80px;background:#eef3ff;box-shadow:0 .7px 0 #8fa6dc;"></div>
<div class="" style="left:286.90px;top:247.40px;width:4.60px;height:0.80px;background:#eef3ff;box-shadow:0 .7px 0 #8fa6dc;"></div>
<div class="" style="left:5.00px;top:448.40px;width:278.80px;height:12.10px;background:linear-gradient(#f4f3ee,#fefefd);"></div>
<div class="" style="left:5.00px;top:448.60px;width:12.80px;height:11.40px;background:linear-gradient(135deg,#cbdcfd,#b4c9f8);border:1px solid #fff;border-radius:2px;box-sizing:border-box;box-shadow:inset 0 0 0 .6px #9fb5ea;"></div>
<svg style="left:11.40px;top:454.30px;overflow:visible" width="1" height="1"><path d="M1.3 -2.6L-1.3 0L1.3 2.6" fill="none" stroke="#4d6185" stroke-width="1.5"/></svg>
<div class="" style="left:269.50px;top:448.60px;width:12.80px;height:11.40px;background:linear-gradient(135deg,#cbdcfd,#b4c9f8);border:1px solid #fff;border-radius:2px;box-sizing:border-box;box-shadow:inset 0 0 0 .6px #9fb5ea;"></div>
<svg style="left:275.90px;top:454.30px;overflow:visible" width="1" height="1"><path d="M-1.3 -2.6L1.3 0L-1.3 2.6" fill="none" stroke="#4d6185" stroke-width="1.5"/></svg>
<div class="" style="left:58.50px;top:448.80px;width:209.50px;height:10.90px;background:linear-gradient(#c9d9fd,#bdd0fc 60%,#b3c8f7);border:1px solid #fff;border-radius:2px;box-sizing:border-box;box-shadow:inset 0 0 0 .6px #a6bbee;"></div>
<div class="" style="left:161.00px;top:452.00px;width:0.80px;height:4.60px;background:#eef3ff;box-shadow:.7px 0 0 #8fa6dc;"></div>
<div class="" style="left:162.60px;top:452.00px;width:0.80px;height:4.60px;background:#eef3ff;box-shadow:.7px 0 0 #8fa6dc;"></div>
<div class="" style="left:164.20px;top:452.00px;width:0.80px;height:4.60px;background:#eef3ff;box-shadow:.7px 0 0 #8fa6dc;"></div>
<div class="" style="left:283.80px;top:448.00px;width:11.20px;height:12.50px;background:#ece9d8;"></div>
<div class="" style="left:0.00px;top:23.50px;width:3.30px;height:552.00px;background:#0a54e0;"></div>
<div class="" style="left:0.00px;top:23.00px;width:1.00px;height:555.00px;background:#0838c8;"></div>
<div class="" style="left:3.30px;top:76.00px;width:0.70px;height:386.00px;background:#ece9d8;"></div>
<div class="" style="left:4.00px;top:76.50px;width:1.00px;height:385.00px;background:#6e6e6e;"></div>
<div class="" style="left:298.00px;top:77.30px;width:497.00px;height:385.00px;background:#fff;border:1px solid #9c9c9c;border-right-color:#e0ddd0;border-bottom:0;box-sizing:border-box;"></div>
<div class="" style="left:299.00px;top:104.27px;width:495.00px;height:13.27px;background:#e4e4f4;"></div>
<div class="" style="left:299.00px;top:130.80px;width:495.00px;height:13.27px;background:#e4e4f4;"></div>
<div class="" style="left:299.00px;top:157.32px;width:495.00px;height:13.27px;background:#e4e4f4;"></div>
<div class="" style="left:299.00px;top:183.86px;width:495.00px;height:13.27px;background:#e4e4f4;"></div>
<div class="" style="left:299.00px;top:210.38px;width:495.00px;height:13.27px;background:#e4e4f4;"></div>
<div class="" style="left:299.00px;top:236.92px;width:495.00px;height:13.27px;background:#e4e4f4;"></div>
<div class="" style="left:299.00px;top:263.44px;width:495.00px;height:13.27px;background:#e4e4f4;"></div>
<div class="" style="left:299.00px;top:289.98px;width:495.00px;height:13.27px;background:#e4e4f4;"></div>
<div class="" style="left:299.00px;top:316.50px;width:495.00px;height:13.27px;background:#e4e4f4;"></div>
<div class="" style="left:299.00px;top:343.04px;width:495.00px;height:13.27px;background:#e4e4f4;"></div>
<div class="" style="left:299.00px;top:369.56px;width:495.00px;height:13.27px;background:#e4e4f4;"></div>
<div class="" style="left:299.00px;top:396.10px;width:495.00px;height:13.27px;background:#e4e4f4;"></div>
<div class="" style="left:299.00px;top:422.62px;width:495.00px;height:13.27px;background:#e4e4f4;"></div>
<div class="" style="left:299.00px;top:449.16px;width:495.00px;height:13.14px;background:#e4e4f4;"></div>
<div class="" style="left:536.50px;top:90.00px;width:1.00px;height:372.30px;background:#e9e4d4;opacity:.7"></div>
<div class="" style="left:618.50px;top:90.00px;width:1.00px;height:372.30px;background:#e9e4d4;opacity:.7"></div>
<div class="" style="left:697.30px;top:90.00px;width:1.00px;height:372.30px;background:#e9e4d4;opacity:.7"></div>
<div class="" style="left:776.80px;top:90.00px;width:1.00px;height:372.30px;background:#e9e4d4;opacity:.7"></div>
<div class="" style="left:299.00px;top:77.80px;width:495.00px;height:11.70px;background:linear-gradient(#f1efe3,#ebe8d8 60%,#e2dfcd);border-bottom:1px solid #a9a79b;box-sizing:border-box;"></div>
<div class="" style="left:536.00px;top:79.00px;width:1.00px;height:9.00px;background:#aca899;box-shadow:1px 0 0 #fff;"></div>
<div class="" style="left:618.00px;top:79.00px;width:1.00px;height:9.00px;background:#aca899;box-shadow:1px 0 0 #fff;"></div>
<div class="" style="left:696.80px;top:79.00px;width:1.00px;height:9.00px;background:#aca899;box-shadow:1px 0 0 #fff;"></div>
<div class="" style="left:776.30px;top:79.00px;width:1.00px;height:9.00px;background:#aca899;box-shadow:1px 0 0 #fff;"></div>
<span id="t46" class="t " style="left:303.70px;top:77.60px;transform:scaleX(0.9436)">名前 △</span>
<span id="t47" class="t " style="right:186.50px;transform-origin:100% 50%;top:77.60px;transform:scaleX(1.0495)"><span class="k">サイズ</span></span>
<span id="t48" class="t " style="left:623.00px;top:77.60px;transform:scaleX(1.0133)">種類</span>
<span id="t49" class="t " style="left:701.00px;top:77.60px;transform:scaleX(1.0133)">更新日時</span>
<div class="" style="left:300.20px;top:91.00px;width:13.00px;height:13.27px;background:#fff;"></div>
<svg style="left:301.50px;top:91.60px" width="12" height="12" viewBox="0 0 12 12"><g fill="none" stroke="#0a14e8" stroke-width="1.2" stroke-linejoin="round"><path d="M2.8 10L3.6 3.1L5.2 5.2"/><path d="M7.5 8L8.6 .7L10.3 2.6"/></g><ellipse cx="1.9" cy="10.2" rx="1.9" ry="1.3" fill="#0a14e8" transform="rotate(-22 1.9 10.3)"/><ellipse cx="6.5" cy="8.3" rx="1.9" ry="1.3" fill="#0a14e8" transform="rotate(-22 6.5 8.4)"/></svg>
<span id="t50" class="t " style="left:314.20px;top:91.83px;transform:scaleX(1.0165)">01 眠<span class="k">れない</span>夜<span class="k">を</span>抱<span class="k">いて</span>.m4a</span>
<span id="t51" class="t " style="right:186.00px;transform-origin:100% 50%;top:91.83px;transform:scaleX(0.9072)">4,234 KB</span>
<span id="t52" class="t " style="left:624.00px;top:91.83px;transform:scaleX(0.8493)">m4a</span>
<span id="t53" class="t " style="left:701.00px;top:91.83px;transform:scaleX(0.9562)">2007/07/24 08:44</span>
<div class="" style="left:300.20px;top:104.27px;width:13.00px;height:13.27px;background:#fff;"></div>
<svg style="left:301.50px;top:104.86px" width="12" height="12" viewBox="0 0 12 12"><g fill="none" stroke="#0a14e8" stroke-width="1.2" stroke-linejoin="round"><path d="M2.8 10L3.6 3.1L5.2 5.2"/><path d="M7.5 8L8.6 .7L10.3 2.6"/></g><ellipse cx="1.9" cy="10.2" rx="1.9" ry="1.3" fill="#0a14e8" transform="rotate(-22 1.9 10.3)"/><ellipse cx="6.5" cy="8.3" rx="1.9" ry="1.3" fill="#0a14e8" transform="rotate(-22 6.5 8.4)"/></svg>
<span id="t54" class="t " style="left:314.20px;top:105.10px;transform:scaleX(1.0049)">02 誰<span class="k">かが</span>待<span class="k">ってる</span>.m4a</span>
<span id="t55" class="t " style="right:186.00px;transform-origin:100% 50%;top:105.10px;transform:scaleX(0.9072)">3,733 KB</span>
<span id="t56" class="t " style="left:624.00px;top:105.10px;transform:scaleX(0.8493)">m4a</span>
<span id="t57" class="t " style="left:701.00px;top:105.10px;transform:scaleX(0.9562)">2007/07/24 08:44</span>
<div class="" style="left:300.20px;top:117.53px;width:13.00px;height:13.27px;background:#fff;"></div>
<svg style="left:301.50px;top:118.13px" width="12" height="12" viewBox="0 0 12 12"><g fill="none" stroke="#0a14e8" stroke-width="1.2" stroke-linejoin="round"><path d="M2.8 10L3.6 3.1L5.2 5.2"/><path d="M7.5 8L8.6 .7L10.3 2.6"/></g><ellipse cx="1.9" cy="10.2" rx="1.9" ry="1.3" fill="#0a14e8" transform="rotate(-22 1.9 10.3)"/><ellipse cx="6.5" cy="8.3" rx="1.9" ry="1.3" fill="#0a14e8" transform="rotate(-22 6.5 8.4)"/></svg>
<span id="t58" class="t " style="left:314.20px;top:118.36px;transform:scaleX(0.9859)">03 <span class="k">サヨナラ</span>言<span class="k">えなくて</span>.m4a</span>
<span id="t59" class="t " style="right:186.00px;transform-origin:100% 50%;top:118.36px;transform:scaleX(0.9072)">3,853 KB</span>
<span id="t60" class="t " style="left:624.00px;top:118.36px;transform:scaleX(0.8493)">m4a</span>
<span id="t61" class="t " style="left:701.00px;top:118.36px;transform:scaleX(0.9562)">2007/07/24 08:44</span>
<div class="" style="left:300.20px;top:130.80px;width:13.00px;height:13.27px;background:#fff;"></div>
<svg style="left:301.50px;top:131.40px" width="12" height="12" viewBox="0 0 12 12"><g fill="none" stroke="#0a14e8" stroke-width="1.2" stroke-linejoin="round"><path d="M2.8 10L3.6 3.1L5.2 5.2"/><path d="M7.5 8L8.6 .7L10.3 2.6"/></g><ellipse cx="1.9" cy="10.2" rx="1.9" ry="1.3" fill="#0a14e8" transform="rotate(-22 1.9 10.3)"/><ellipse cx="6.5" cy="8.3" rx="1.9" ry="1.3" fill="#0a14e8" transform="rotate(-22 6.5 8.4)"/></svg>
<span id="t62" class="t " style="left:314.20px;top:131.63px;transform:scaleX(1.0342)">04 <span class="k">あの</span>微笑<span class="k">みを</span>忘<span class="k">れないで</span>.m4a</span>
<span id="t63" class="t " style="right:186.00px;transform-origin:100% 50%;top:131.63px;transform:scaleX(0.9072)">4,227 KB</span>
<span id="t64" class="t " style="left:624.00px;top:131.63px;transform:scaleX(0.8493)">m4a</span>
<span id="t65" class="t " style="left:701.00px;top:131.63px;transform:scaleX(0.9562)">2007/07/24 08:44</span>
<div class="" style="left:300.20px;top:144.06px;width:13.00px;height:13.27px;background:#fff;"></div>
<svg style="left:301.50px;top:144.66px" width="12" height="12" viewBox="0 0 12 12"><g fill="none" stroke="#0a14e8" stroke-width="1.2" stroke-linejoin="round"><path d="M2.8 10L3.6 3.1L5.2 5.2"/><path d="M7.5 8L8.6 .7L10.3 2.6"/></g><ellipse cx="1.9" cy="10.2" rx="1.9" ry="1.3" fill="#0a14e8" transform="rotate(-22 1.9 10.3)"/><ellipse cx="6.5" cy="8.3" rx="1.9" ry="1.3" fill="#0a14e8" transform="rotate(-22 6.5 8.4)"/></svg>
<span id="t66" class="t " style="left:314.20px;top:144.89px;transform:scaleX(0.9907)">05 好<span class="k">きなように</span>踊<span class="k">りたいの</span>.m4a</span>
<span id="t67" class="t " style="right:186.00px;transform-origin:100% 50%;top:144.89px;transform:scaleX(0.9072)">4,176 KB</span>
<span id="t68" class="t " style="left:624.00px;top:144.89px;transform:scaleX(0.8493)">m4a</span>
<span id="t69" class="t " style="left:701.00px;top:144.89px;transform:scaleX(0.9562)">2007/07/24 08:44</span>
<div class="" style="left:300.20px;top:157.32px;width:13.00px;height:13.27px;background:#fff;"></div>
<svg style="left:301.50px;top:157.92px" width="12" height="12" viewBox="0 0 12 12"><g fill="none" stroke="#0a14e8" stroke-width="1.2" stroke-linejoin="round"><path d="M2.8 10L3.6 3.1L5.2 5.2"/><path d="M7.5 8L8.6 .7L10.3 2.6"/></g><ellipse cx="1.9" cy="10.2" rx="1.9" ry="1.3" fill="#0a14e8" transform="rotate(-22 1.9 10.3)"/><ellipse cx="6.5" cy="8.3" rx="1.9" ry="1.3" fill="#0a14e8" transform="rotate(-22 6.5 8.4)"/></svg>
<span id="t70" class="t " style="left:314.20px;top:158.16px;transform:scaleX(0.9386)">06 Dangerous Tonight.m4a</span>
<span id="t71" class="t " style="right:186.00px;transform-origin:100% 50%;top:158.16px;transform:scaleX(0.9072)">4,003 KB</span>
<span id="t72" class="t " style="left:624.00px;top:158.16px;transform:scaleX(0.8493)">m4a</span>
<span id="t73" class="t " style="left:701.00px;top:158.16px;transform:scaleX(0.9562)">2007/07/24 08:44</span>
<div class="" style="left:300.20px;top:170.59px;width:13.00px;height:13.27px;background:#fff;"></div>
<svg style="left:301.50px;top:171.19px" width="12" height="12" viewBox="0 0 12 12"><g fill="none" stroke="#0a14e8" stroke-width="1.2" stroke-linejoin="round"><path d="M2.8 10L3.6 3.1L5.2 5.2"/><path d="M7.5 8L8.6 .7L10.3 2.6"/></g><ellipse cx="1.9" cy="10.2" rx="1.9" ry="1.3" fill="#0a14e8" transform="rotate(-22 1.9 10.3)"/><ellipse cx="6.5" cy="8.3" rx="1.9" ry="1.3" fill="#0a14e8" transform="rotate(-22 6.5 8.4)"/></svg>
<span id="t74" class="t " style="left:314.20px;top:171.42px;transform:scaleX(1.0029)">07 <span class="k">こんなに</span>愛<span class="k">しても</span>.m4a</span>
<span id="t75" class="t " style="right:186.00px;transform-origin:100% 50%;top:171.42px;transform:scaleX(0.9072)">4,753 KB</span>
<span id="t76" class="t " style="left:624.00px;top:171.42px;transform:scaleX(0.8493)">m4a</span>
<span id="t77" class="t " style="left:701.00px;top:171.42px;transform:scaleX(0.9562)">2007/07/24 08:44</span>
<div class="" style="left:300.20px;top:183.86px;width:13.00px;height:13.27px;background:#fff;"></div>
<div class="" style="left:300.60px;top:184.06px;width:12.80px;height:12.87px;background:#9db3e6;"></div>
<div class="" style="left:313.60px;top:184.16px;width:161.00px;height:12.67px;background:#316ac5;outline:1px dotted #c8d8f0;outline-offset:-1px;"></div>
<svg style="left:301.50px;top:184.46px" width="12" height="12" viewBox="0 0 12 12"><g fill="none" stroke="#0a14e8" stroke-width="1.2" stroke-linejoin="round"><path d="M2.8 10L3.6 3.1L5.2 5.2"/><path d="M7.5 8L8.6 .7L10.3 2.6"/></g><ellipse cx="1.9" cy="10.2" rx="1.9" ry="1.3" fill="#0a14e8" transform="rotate(-22 1.9 10.3)"/><ellipse cx="6.5" cy="8.3" rx="1.9" ry="1.3" fill="#0a14e8" transform="rotate(-22 6.5 8.4)"/></svg>
<span id="t78" class="t " style="left:314.20px;top:184.69px;color:#fff;transform:scaleX(0.9368)">08 Why Don't You Leave Me Alone.m4a</span>
<span id="t79" class="t " style="right:186.00px;transform-origin:100% 50%;top:184.69px;transform:scaleX(0.9072)">3,225 KB</span>
<span id="t80" class="t " style="left:624.00px;top:184.69px;transform:scaleX(0.8493)">m4a</span>
<span id="t81" class="t " style="left:701.00px;top:184.69px;transform:scaleX(0.9562)">2007/07/24 08:44</span>
<div class="" style="left:300.20px;top:197.12px;width:13.00px;height:13.27px;background:#fff;"></div>
<svg style="left:301.50px;top:197.72px" width="12" height="12" viewBox="0 0 12 12"><g fill="none" stroke="#0a14e8" stroke-width="1.2" stroke-linejoin="round"><path d="M2.8 10L3.6 3.1L5.2 5.2"/><path d="M7.5 8L8.6 .7L10.3 2.6"/></g><ellipse cx="1.9" cy="10.2" rx="1.9" ry="1.3" fill="#0a14e8" transform="rotate(-22 1.9 10.3)"/><ellipse cx="6.5" cy="8.3" rx="1.9" ry="1.3" fill="#0a14e8" transform="rotate(-22 6.5 8.4)"/></svg>
<span id="t82" class="t " style="left:314.20px;top:197.95px;transform:scaleX(0.9885)">09 愛<span class="k">は</span>眠<span class="k">ってる</span>.m4a</span>
<span id="t83" class="t " style="right:186.00px;transform-origin:100% 50%;top:197.95px;transform:scaleX(0.9072)">3,486 KB</span>
<span id="t84" class="t " style="left:624.00px;top:197.95px;transform:scaleX(0.8493)">m4a</span>
<span id="t85" class="t " style="left:701.00px;top:197.95px;transform:scaleX(0.9562)">2007/07/24 08:44</span>
<div class="" style="left:300.20px;top:210.38px;width:13.00px;height:13.27px;background:#fff;"></div>
<svg style="left:301.50px;top:210.98px" width="12" height="12" viewBox="0 0 12 12"><g fill="none" stroke="#0a14e8" stroke-width="1.2" stroke-linejoin="round"><path d="M2.8 10L3.6 3.1L5.2 5.2"/><path d="M7.5 8L8.6 .7L10.3 2.6"/></g><ellipse cx="1.9" cy="10.2" rx="1.9" ry="1.3" fill="#0a14e8" transform="rotate(-22 1.9 10.3)"/><ellipse cx="6.5" cy="8.3" rx="1.9" ry="1.3" fill="#0a14e8" transform="rotate(-22 6.5 8.4)"/></svg>
<span id="t86" class="t " style="left:314.20px;top:211.22px;transform:scaleX(0.9972)">10 遠<span class="k">い</span>日<span class="k">の</span>Nostalgia.m4a</span>
<span id="t87" class="t " style="right:186.00px;transform-origin:100% 50%;top:211.22px;transform:scaleX(0.9072)">5,537 KB</span>
<span id="t88" class="t " style="left:624.00px;top:211.22px;transform:scaleX(0.8493)">m4a</span>
<span id="t89" class="t " style="left:701.00px;top:211.22px;transform:scaleX(0.9562)">2007/07/24 08:44</span>
<div class="" style="left:300.20px;top:223.65px;width:13.00px;height:13.27px;background:#fff;"></div>
<svg style="left:301.50px;top:224.25px" width="12" height="12" viewBox="0 0 12 12"><g fill="none" stroke="#0a14e8" stroke-width="1.2" stroke-linejoin="round"><path d="M2.8 10L3.6 3.1L5.2 5.2"/><path d="M7.5 8L8.6 .7L10.3 2.6"/></g><ellipse cx="1.9" cy="10.2" rx="1.9" ry="1.3" fill="#0a14e8" transform="rotate(-22 1.9 10.3)"/><ellipse cx="6.5" cy="8.3" rx="1.9" ry="1.3" fill="#0a14e8" transform="rotate(-22 6.5 8.4)"/></svg>
<span id="t90" class="t " style="left:314.20px;top:224.48px;transform:scaleX(0.9513)">11 So Together.m4a</span>
<span id="t91" class="t " style="right:186.00px;transform-origin:100% 50%;top:224.48px;transform:scaleX(0.9072)">4,817 KB</span>
<span id="t92" class="t " style="left:624.00px;top:224.48px;transform:scaleX(0.8493)">m4a</span>
<span id="t93" class="t " style="left:701.00px;top:224.48px;transform:scaleX(0.9562)">2007/07/24 08:44</span>
<div class="" style="left:4.00px;top:462.30px;width:791.00px;height:12.70px;background:linear-gradient(#eeecdf,#ebe8d8 60%,#e4e1d0);border-bottom:1px solid #a3a196;box-sizing:border-box;"></div>
<div class="" style="left:157.00px;top:463.50px;width:1.00px;height:9.50px;background:#aca899;box-shadow:1px 0 0 #fff;"></div>
<span id="t94" class="t " style="left:8.00px;top:462.80px;transform:scaleX(0.9965)"><span class="k">メニュータイトル</span></span>
<span id="t95" class="t " style="left:163.50px;top:462.80px;transform:scaleX(1.0826)"><span class="k">ファイルの</span>送<span class="k">り</span>先<span class="k">アドレス</span></span>
<div class="" style="left:4.00px;top:475.00px;width:791.00px;height:55.80px;background:#ffdccf;"></div>
<div class="" style="left:4.00px;top:487.30px;width:791.00px;height:1.00px;background:#fbeadb;"></div>
<div class="" style="left:4.00px;top:498.30px;width:791.00px;height:1.00px;background:#fbeadb;"></div>
<div class="" style="left:4.00px;top:509.30px;width:791.00px;height:1.00px;background:#fbeadb;"></div>
<div class="" style="left:4.00px;top:520.30px;width:791.00px;height:1.00px;background:#fbeadb;"></div>
<div class="" style="left:157.30px;top:475.00px;width:1.00px;height:55.80px;background:#f6e2d2;"></div>
<span id="t96" class="t nv" style="left:6.50px;top:476.20px;transform:scaleX(1.0822)"><span class="k">バックアップ</span> <span class="k">フォルダ</span></span>
<span id="t97" class="t nv" style="left:163.50px;top:476.20px;transform:scaleX(1.0948)">c:¥<span class="k">バックアップ</span></span>
<span id="t98" class="t nv" style="left:6.50px;top:487.20px;transform:scaleX(0.9824)">E: SD<span class="k">カード</span></span>
<span id="t99" class="t nv" style="left:163.50px;top:487.20px;transform:scaleX(1.0347)">e:¥</span>
<span id="t100" class="t nv" style="left:6.50px;top:498.20px;transform:scaleX(1.0435)">Z: Athlon64</span>
<span id="t101" class="t nv" style="left:163.50px;top:498.20px;transform:scaleX(1.0787)">z:¥</span>
<span id="t102" class="t nv" style="left:6.50px;top:509.20px;transform:scaleX(0.9954)">Y:¥</span>
<span id="t103" class="t nv" style="left:163.50px;top:509.20px;transform:scaleX(0.9954)">Y:¥</span>
<div class="" style="left:291.50px;top:494.60px;width:4.50px;height:3.60px;background:#2a5fc0;"></div>
<div class="" style="left:3.30px;top:530.80px;width:792.80px;height:23.20px;background:#ece9d8;"></div>
<span id="t104" class="t " style="left:11.10px;top:538.50px;color:#2222ff;font-size:10.3px;transform:scaleX(0.8715)">保存先 &gt;&gt;</span>
<div class="inp" style="left:54.50px;top:535.00px;width:342.00px;height:16.20px;"></div>
<span id="t105" class="t " style="left:404.90px;top:538.50px;color:#2222ff;font-size:10.3px;transform:scaleX(0.8715)">解凍先 &gt;&gt;</span>
<div class="inp" style="left:448.80px;top:535.00px;width:342.40px;height:16.20px;"></div>
<div class="" style="left:3.30px;top:552.40px;width:792.80px;height:1.00px;background:#dcd8c8;"></div>
<div class="" style="left:3.30px;top:553.20px;width:792.80px;height:1.00px;background:#fff;"></div>
<div class="" style="left:84.00px;top:556.00px;width:1.00px;height:18.00px;background:#c9c5b2;box-shadow:1px 0 0 #fff;"></div>
<div class="" style="left:210.50px;top:556.00px;width:1.00px;height:18.00px;background:#c9c5b2;box-shadow:1px 0 0 #fff;"></div>
<div class="" style="left:378.00px;top:556.00px;width:1.00px;height:18.00px;background:#c9c5b2;box-shadow:1px 0 0 #fff;"></div>
<div class="" style="left:532.50px;top:556.00px;width:1.00px;height:18.00px;background:#c9c5b2;box-shadow:1px 0 0 #fff;"></div>
<div class="" style="left:689.00px;top:556.00px;width:1.00px;height:18.00px;background:#c9c5b2;box-shadow:1px 0 0 #fff;"></div>
<div class="" style="left:15.50px;top:560.00px;width:8.40px;height:8.40px;background:radial-gradient(circle at 35% 35%,#fff 40%,#e6e6dc);border:1px solid #777;border-right-color:#f8f8f4;border-bottom-color:#f8f8f4;border-radius:50%;box-sizing:border-box;transform:rotate(0deg);"></div>
<div class="" style="left:51.00px;top:560.00px;width:8.40px;height:8.40px;background:radial-gradient(circle at 35% 35%,#fff 40%,#e6e6dc);border:1px solid #777;border-right-color:#f8f8f4;border-bottom-color:#f8f8f4;border-radius:50%;box-sizing:border-box;transform:rotate(0deg);"></div>
<div class="" style="left:53.70px;top:562.70px;width:3.00px;height:3.00px;background:#222;border-radius:50%;"></div>
<span id="t106" class="t hv" style="left:28.90px;top:558.40px;color:#0a9a22;font-size:9.8px;transform:scaleX(0.8695)">LZH</span>
<span id="t107" class="t hv2" style="left:63.80px;top:558.40px;color:#f01818;font-size:9.8px;transform:scaleX(0.8721)">ZIP</span>
<div class="inp" style="left:88.70px;top:555.60px;width:119.50px;height:17.00px;border-width:1.5px;"></div>
<span id="t108" class="t " style="left:90.50px;top:557.90px;line-height:16px;color:#111;font-size:15.5px;transform:scaleX(0.7753)">*****************</span>
<div class="" style="left:213.80px;top:557.30px;width:24.00px;height:15.80px;background:#0000ff;border-radius:1.6px;"></div>
<span id="t109" class="t hv2" style="left:221.40px;top:557.50px;line-height:16px;color:#efecdc;font-size:15.2px;font-weight:bold;transform:scaleX(1.0410)">1</span>
<div class="" style="left:241.20px;top:557.30px;width:24.00px;height:15.80px;background:#0000ff;border-radius:1.6px;"></div>
<span id="t110" class="t hv2" style="left:248.80px;top:557.50px;line-height:16px;color:#efecdc;font-size:15.2px;font-weight:bold;transform:scaleX(1.0410)">2</span>
<div class="" style="left:268.60px;top:557.30px;width:24.00px;height:15.80px;background:#0000ff;border-radius:1.6px;"></div>
<span id="t111" class="t hv2" style="left:276.20px;top:557.50px;line-height:16px;color:#efecdc;font-size:15.2px;font-weight:bold;transform:scaleX(1.0410)">3</span>
<div class="" style="left:296.00px;top:557.30px;width:24.00px;height:15.80px;background:#0000ff;border-radius:1.6px;"></div>
<span id="t112" class="t hv2" style="left:303.60px;top:557.50px;line-height:16px;color:#efecdc;font-size:15.2px;font-weight:bold;transform:scaleX(1.0410)">4</span>
<div class="" style="left:323.40px;top:557.30px;width:24.00px;height:15.80px;background:#0000ff;border-radius:1.6px;"></div>
<span id="t113" class="t hv2" style="left:331.00px;top:557.50px;line-height:16px;color:#efecdc;font-size:15.2px;font-weight:bold;transform:scaleX(1.0410)">5</span>
<div class="" style="left:350.80px;top:557.30px;width:24.00px;height:15.80px;background:#0000ff;border-radius:1.6px;"></div>
<span id="t114" class="t hv2" style="left:358.40px;top:557.50px;line-height:16px;color:#efecdc;font-size:15.2px;font-weight:bold;transform:scaleX(1.0410)">6</span>
<svg style="left:784px;top:563px" width="12" height="12" viewBox="0 0 12 12"><path d="M11 2L2 11M11 5.5L5.5 11M11 9L9 11" stroke="#b8b4a0" stroke-width="1.2"/><path d="M11.8 2.8L2.8 11.8M11.8 6.3L6.3 11.8" stroke="#fff" stroke-width=".8"/></svg>
<div class="menu" style="left:403.00px;top:191.40px;width:153.60px;height:336.18px;"></div>
<span id="t115" class="t " style="left:422.00px;top:194.84px;transform:scaleX(0.8540)"><span class="k">コピー</span>(I)</span>
<span id="t116" class="t " style="left:519.40px;top:194.84px;transform:scaleX(0.9691)">Ctrl+C</span>
<span id="t117" class="t " style="left:422.00px;top:209.32px;transform:scaleX(0.9503)">切<span class="k">り</span>取<span class="k">り</span>(J)</span>
<span id="t118" class="t " style="left:519.40px;top:209.32px;transform:scaleX(0.9881)">Ctrl+X</span>
<span id="t119" class="t " style="left:422.00px;top:223.80px;color:#aca899;transform:scaleX(0.9399)">貼<span class="k">り</span>付<span class="k">け</span>(K)</span>
<span id="t120" class="t " style="left:519.40px;top:223.80px;color:#aca899;transform:scaleX(0.9881)">Ctrl+V</span>
<div class="sep" style="left:405.60px;top:240.80px;width:148.40px;height:1.00px;"></div>
<div class="" style="left:405.80px;top:244.70px;width:12.30px;height:12.90px;background:#000;"></div>
<span id="t121" class="t " style="left:406.80px;top:246.00px;line-height:10px;color:#fff;font-size:9.6px;transform:scaleX(0.9745)">an</span>
<span id="t122" class="t " style="left:422.00px;top:245.20px;transform:scaleX(1.0494)">暗号化 ( --&gt; ANx )(A)</span>
<span id="t123" class="t " style="left:422.00px;top:259.68px;transform:scaleX(1.0432)">復号化 ( ANx --&gt; )(N)</span>
<div class="sep" style="left:405.60px;top:276.68px;width:148.40px;height:1.00px;"></div>
<span id="t124" class="t " style="left:422.00px;top:281.08px;color:#aca899;transform:scaleX(0.9403)">圧縮<span class="k">ファイルの</span>内容<span class="k">を</span>見<span class="k">る</span>(M)</span>
<div class="sep" style="left:405.60px;top:298.08px;width:148.40px;height:1.00px;"></div>
<div class="" style="left:406.60px;top:302.18px;width:11.80px;height:12.50px;background:#fff;border:1.7px solid #ff1010;box-sizing:border-box;"></div>
<span id="t125" class="t " style="left:408.30px;top:303.48px;line-height:10px;color:#ee0000;font-size:9px;font-weight:bold;transform:scaleX(0.9333)">圧</span>
<span id="t126" class="t " style="left:422.00px;top:302.48px;transform:scaleX(1.0111)">圧縮 ( --&gt; LZH, ZIP )(L)</span>
<span id="t127" class="t " style="left:422.00px;top:316.96px;transform:scaleX(1.0058)">解凍 ( LZH, ZIP --&gt; )(Z)</span>
<div class="sep" style="left:405.60px;top:333.96px;width:148.40px;height:1.00px;"></div>
<svg style="left:406.80px;top:340.16px" width="10.8" height="9.2" viewBox="0 0 10.8 9.2"><path d="M.6 7.8V1.5Q.6 .6 1.5 .6H3.8Q4.6 .6 4.9 1.2L5.3 2.1H9.2Q10.1 2.1 10.1 3V7.8Q10.1 8.5 9.2 8.5H1.5Q.6 8.5 .6 7.8z" fill="#ffff00" stroke="#1c1a00" stroke-width="1.15"/><path d="M1.2 8.5H9.3Q10.1 8.5 10.1 7.6V3.4" fill="none" stroke="#000" stroke-width=".5"/></svg>
<span id="t128" class="t " style="left:422.00px;top:338.36px;transform:scaleX(0.9550)">保存先<span class="k">に</span>指定<span class="k">する</span>(O)</span>
<svg style="left:406.80px;top:354.64px" width="10.8" height="9.2" viewBox="0 0 10.8 9.2"><path d="M.6 7.8V1.5Q.6 .6 1.5 .6H3.8Q4.6 .6 4.9 1.2L5.3 2.1H9.2Q10.1 2.1 10.1 3V7.8Q10.1 8.5 9.2 8.5H1.5Q.6 8.5 .6 7.8z" fill="#ffff00" stroke="#1c1a00" stroke-width="1.15"/><path d="M1.2 8.5H9.3Q10.1 8.5 10.1 7.6V3.4" fill="none" stroke="#000" stroke-width=".5"/></svg>
<span id="t129" class="t " style="left:422.00px;top:352.84px;transform:scaleX(0.9671)">解凍先<span class="k">に</span>指定<span class="k">する</span>(P)</span>
<div class="sep" style="left:405.60px;top:369.84px;width:148.40px;height:1.00px;"></div>
<span id="t130" class="t " style="left:422.00px;top:374.24px;transform:scaleX(0.9251)">新規<span class="k">フォルダ</span>作成(Q)</span>
<span id="t131" class="t " style="left:422.00px;top:388.72px;transform:scaleX(0.9606)">名前<span class="k">の</span>変更(R)</span>
<span id="t132" class="t " style="left:422.00px;top:403.20px;color:#aca899;transform:scaleX(0.8987)"><span class="k">ショートカットの</span>作成(S)</span>
<div class="sep" style="left:405.60px;top:420.20px;width:148.40px;height:1.00px;"></div>
<div class="hl" style="left:405.00px;top:423.46px;width:149.60px;height:14.48px;"></div>
<svg style="left:405.80px;top:425.10px" width="13" height="11.6" viewBox="0 0 13 11.6"><path d="M.6 10.8V1.3Q.6 .6 1.3 .6H5.7Q6.4 .6 6.6 1.3L7 3H9.7V4.4" fill="#00e400" stroke="#161600" stroke-width="1.1"/><path d="M1 4.6H3.2L1 10z" fill="#6b5800"/><path d="M.6 11L2.9 4.4H12.5L10.3 11z" fill="#00ff00" stroke="#161600" stroke-width="1.1" stroke-linejoin="round"/></svg>
<span id="t133" class="t " style="left:422.00px;top:424.60px;color:#fff;transform:scaleX(0.8966)"><span class="k">ファイルを</span>送<span class="k">る</span>(T)</span>
<svg style="left:548.10px;top:427.70px" width="4" height="6" viewBox="0 0 4 6"><path d="M.4 .2L3.4 3L.4 5.8z" fill="#fff"/></svg>
<div class="" style="left:405.40px;top:439.28px;width:12.60px;height:11.40px;background:#ff1414;"></div>
<span id="t134" class="t " style="left:406.20px;top:441.18px;line-height:8px;color:#fff;font-size:7px;transform:scaleX(0.9737)">exe</span>
<span id="t135" class="t " style="left:422.00px;top:439.08px;transform:scaleX(0.8981)"><span class="k">プログラムから</span>開<span class="k">く</span>(U)</span>
<svg style="left:548.10px;top:442.18px" width="4" height="6" viewBox="0 0 4 6"><path d="M.4 .2L3.4 3L.4 5.8z" fill="#000"/></svg>
<div class="sep" style="left:405.60px;top:456.08px;width:148.40px;height:1.00px;"></div>
<svg style="left:406.60px;top:461.58px" width="10" height="10" viewBox="0 0 10 10"><path d="M1 1L9 9M9 1L1 9" stroke="#ee1111" stroke-width="1.7"/></svg>
<span id="t136" class="t " style="left:422.00px;top:460.48px;transform:scaleX(1.0058)">削除 （<span class="k">ごみ</span>箱）(V)</span>
<div class="sep" style="left:405.60px;top:477.48px;width:148.40px;height:1.00px;"></div>
<span id="t137" class="t " style="left:422.00px;top:481.88px;color:#aca899;transform:scaleX(0.8846)">画像閉<span class="k">じる</span>(W)</span>
<span id="t138" class="t " style="left:422.00px;top:496.36px;transform:scaleX(0.9708)"><span class="k">すべて</span>選択(X)</span>
<span id="t139" class="t " style="left:422.00px;top:510.84px;transform:scaleX(0.9726)">最新<span class="k">の</span>情報<span class="k">に</span>更新(Y)</span>
<div class="menu" style="left:552.00px;top:421.40px;width:126.40px;height:63.32px;"></div>
<span id="t140" class="t " style="left:570.70px;top:425.04px;transform:scaleX(0.8828)"><span class="k">バックアップ</span> <span class="k">フォルダ</span>(X)</span>
<div class="hl" style="left:554.00px;top:438.18px;width:122.40px;height:14.48px;"></div>
<span id="t141" class="t " style="left:570.70px;top:439.52px;color:#fff;transform:scaleX(0.9114)">E: SD<span class="k">カード</span>(E)</span>
<span id="t142" class="t " style="left:570.70px;top:454.00px;transform:scaleX(0.9908)">Z: Athlon64</span>
<span id="t143" class="t " style="left:570.70px;top:468.48px;transform:scaleX(0.9585)">Y:¥</span>
<div class="menu" style="left:640.60px;top:41.00px;width:150.40px;height:184.80px;"></div>
<span id="t144" class="t " style="left:658.80px;top:44.20px;transform:scaleX(0.9548)"><span class="k">ボタン</span>色<span class="k">の</span>変更(R)</span>
<span id="t145" class="t " style="left:658.80px;top:58.60px;transform:scaleX(0.9185)"><span class="k">ストライプカラーの</span>変更(S)</span>
<div class="sep" style="left:643.20px;top:75.85px;width:145.20px;height:1.00px;"></div>
<div class="" style="left:643.80px;top:81.40px;width:12.60px;height:9.00px;background:#6d7b82;border:1px solid #3d464c;border-radius:1.5px;box-sizing:border-box;"></div>
<div class="" style="left:646.60px;top:85.20px;width:6.80px;height:1.60px;background:#2fd0c0;"></div>
<span id="t146" class="t " style="left:658.80px;top:80.30px;transform:scaleX(0.9029)"><span class="k">ネットワークドライブの</span>接続(T)</span>
<div class="sep" style="left:643.20px;top:97.55px;width:145.20px;height:1.00px;"></div>
<div class="" style="left:643.00px;top:101.60px;width:12.60px;height:11.40px;background:#ff1414;"></div>
<span id="t147" class="t " style="left:643.80px;top:103.50px;line-height:8px;color:#fff;font-size:7px;transform:scaleX(0.9737)">exe</span>
<span id="t148" class="t " style="left:658.80px;top:102.00px;transform:scaleX(0.9086)"><span class="k">プログラムから</span>開<span class="k">くの</span>編集(U)</span>
<div class="hl" style="left:642.60px;top:114.70px;width:146.40px;height:14.40px;"></div>
<svg style="left:643.40px;top:116.30px" width="13" height="11.6" viewBox="0 0 13 11.6"><path d="M.6 10.8V1.3Q.6 .6 1.3 .6H5.7Q6.4 .6 6.6 1.3L7 3H9.7V4.4" fill="#00e400" stroke="#161600" stroke-width="1.1"/><path d="M1 4.6H3.2L1 10z" fill="#6b5800"/><path d="M.6 11L2.9 4.4H12.5L10.3 11z" fill="#00ff00" stroke="#161600" stroke-width="1.1" stroke-linejoin="round"/></svg>
<span id="t149" class="t " style="left:658.80px;top:116.40px;color:#fff;transform:scaleX(0.9310)"><span class="k">ファイル</span>送<span class="k">り</span>先<span class="k">の</span>編集(V)</span>
<div class="sep" style="left:643.20px;top:133.65px;width:145.20px;height:1.00px;"></div>
<svg style="left:644.20px;top:138.60px" width="10" height="10" viewBox="0 0 10 10"><path d="M1 1L9 9M9 1L1 9" stroke="#ee1111" stroke-width="1.7"/></svg>
<span id="t150" class="t " style="left:658.80px;top:138.10px;transform:scaleX(0.8927)"><span class="k">ごみ</span>箱<span class="k">を</span>開<span class="k">く</span>(W)</span>
<span id="t151" class="t " style="left:658.80px;top:152.50px;transform:scaleX(0.9052)">IP<span class="k">アドレス</span>(I)</span>
<span id="t152" class="t " style="left:658.80px;top:166.90px;transform:scaleX(0.9271)">MAC<span class="k">アドレス</span>(M)</span>
<span id="t153" class="t " style="left:658.80px;top:181.30px;transform:scaleX(0.8928)"><span class="k">コンピュータ</span>名(X)</span>
<span id="t154" class="t " style="left:658.80px;top:195.70px;transform:scaleX(0.9909)"><span class="k">ユーザー</span>名(Y)</span>
<span id="t155" class="t " style="left:658.80px;top:210.10px;transform:scaleX(0.9433)">物理<span class="k">メモリ</span>容量(Z)</span>
<div class="menu" style="left:175.30px;top:494.00px;width:116.00px;height:54.80px;"></div>
<span id="t156" class="t " style="left:188.80px;top:496.73px;transform:scaleX(0.8484)">アドレスの読み込み(<u>W</u>)</span>
<span id="t157" class="t " style="left:188.80px;top:509.17px;transform:scaleX(0.8318)">タイトルの編集(<u>X</u>)</span>
<span id="t158" class="t " style="left:188.80px;top:521.62px;transform:scaleX(0.9723)">削除(<u>Y</u>)</span>
<span id="t159" class="t " style="left:188.80px;top:534.08px;transform:scaleX(0.8826)">閉じる(<u>Z</u>)</span>
</div></body></html>
